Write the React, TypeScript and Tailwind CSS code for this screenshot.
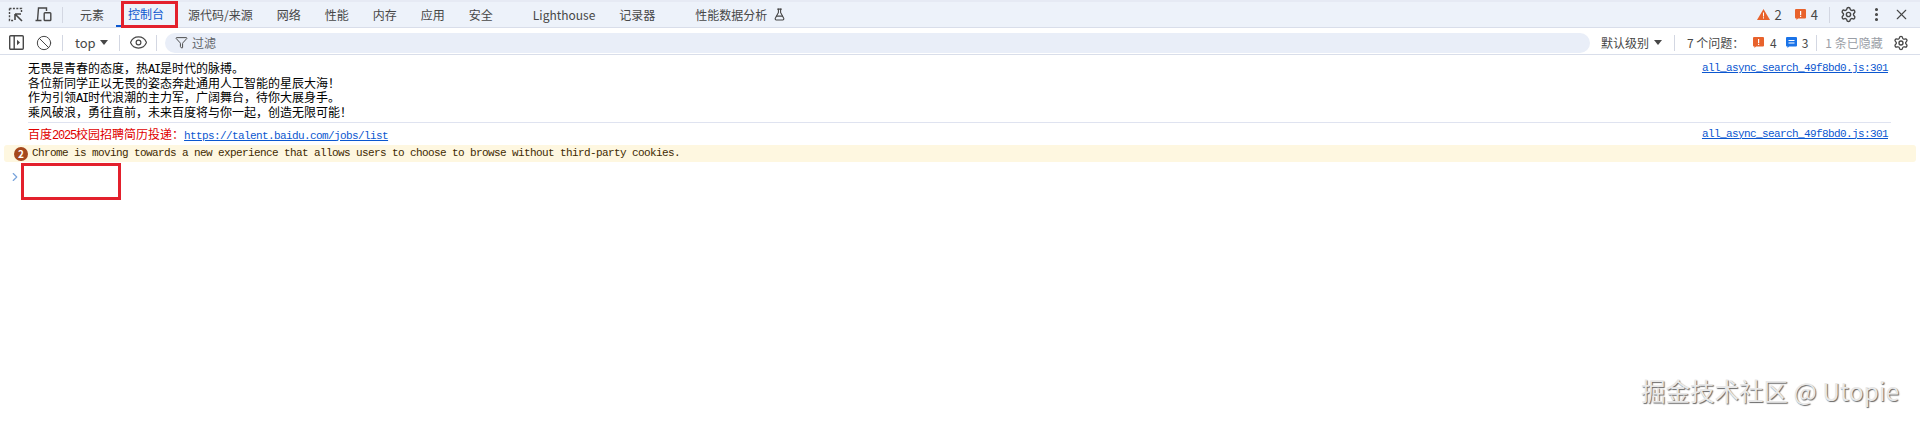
import React from 'react';
import { Settings, EllipsisVertical, X, Ban, Eye, Filter, ChevronRight, FlaskConical } from 'lucide-react';

const sans = { fontFamily: '"Noto Sans CJK SC", "Noto Sans", sans-serif' };
const mono = { fontFamily: '"Liberation Mono", monospace' };

const InspectIcon = () => (
  <svg width="16" height="16" viewBox="0 0 16 16" fill="none" stroke="#474747" strokeWidth="1.4">
    <path d="M1.5 1.5h12v4M1.5 1.500v12h4" strokeDasharray="2 1.4" />
    <path d="M7 7h6M7 7v6M7.5 7.5l6.5 6.5" strokeWidth="1.6" />
  </svg>
);

const DeviceIcon = () => (
  <svg width="17" height="15" viewBox="0 0 17 15" fill="none" stroke="#474747" strokeWidth="1.4">
    <path d="M0.5 13.5h6M2.5 13.5l1-12.5h8v3" />
    <rect x="9.2" y="5.7" width="6.6" height="7.8" rx="0.8" />
  </svg>
);

const DockIcon = () => (
  <svg width="15" height="15" viewBox="0 0 15 15" fill="none" stroke="#474747" strokeWidth="1.4">
    <rect x="0.7" y="0.7" width="13.6" height="13.6" rx="1" />
    <path d="M5.2 1v13" />
    <path d="M8 4.8l3 2.7-3 2.7z" fill="#474747" stroke="none" />
  </svg>
);

const Caret = () => <span className="block w-0 h-0 border-x-[4px] border-x-transparent border-t-[5px] border-t-[#474747]" />;
const Sep = ({ className = 'mx-[11px]' }: { className?: string }) => <span className={`block w-px h-4 bg-[#d3d7e2] ${className}`} />;

const WarnTriangle = () => (
  <svg width="13" height="11" viewBox="0 0 13 11"><path d="M6.5 0L13 11H0z" fill="#e8622c" /><path d="M6 3.5h1V7.5H6zM6 8.2h1v1.2H6z" fill="#fff" /></svg>
);
const OrangeBox = () => (
  <svg width="11" height="11" viewBox="0 0 11 11"><path d="M1 0h9a1 1 0 0 1 1 1v7.500a1 1 0 0 1-1 1H3L1.500 11V9.500H1a1 1 0 0 1-1-1V1a1 1 0 0 1 1-1z" fill="#e8622c" /><path d="M5 2h1.200v4H5zM5 6.800h1.200V8H5z" fill="#fff" /></svg>
);
const BlueBox = () => (
  <svg width="11" height="11" viewBox="0 0 11 11"><path d="M1 0h9a1 1 0 0 1 1 1v7.500a1 1 0 0 1-1 1H3L1.500 11V9.500H1a1 1 0 0 1-1-1V1a1 1 0 0 1 1-1z" fill="#1a73e8" /><path d="M2.500 3h6v1h-6zM2.500 5.500h6v1h-6z" fill="#fff" /></svg>
);

const Tab = ({ label, active, className = '' }: { label: string; active?: boolean; className?: string }) => (
  <div className={`h-full flex items-center px-3 ${active ? 'text-[#0b57d0] border-b-2 border-[#0b57d0]' : 'text-[#474747]'} ${className}`}>{label}</div>
);

// console text: 6px wide latin next to 12px wide han
const Latin = ({ children }: { children: React.ReactNode }) => <span className="text-[12px] tracking-[-1.2px] leading-none" style={mono}>{children}</span>;

const Line = ({ children }: { children: React.ReactNode }) => <div className="h-[14.5px]">{children}</div>;

const SourceLink = () => (
  <a className="block h-[15px] text-[11px] leading-[15px] tracking-[-0.6px] text-[#0b57d0] underline mr-[3px]" style={mono}>all_async_search_49f8bd0.js:301</a>
);

export default function App() {
  return (
    <div className="relative h-[421px] w-[1920px] overflow-hidden bg-white text-[12px]" style={sans}>
      <div className="flex items-center h-[28px] bg-[#edf2fa] border-t-2 border-t-[#e6eaf4] border-b border-b-[#d9deea]">
        <div className="flex items-center pl-[8px]">
          <InspectIcon />
          <span className="ml-[11px]"><DeviceIcon /></span>
          <Sep className="ml-[10px] mr-[5px]" />
        </div>
        <Tab label="元素" />
        <Tab label="控制台" active />
        <Tab label="源代码/来源" />
        <Tab label="网络" />
        <Tab label="性能" />
        <Tab label="内存" />
        <Tab label="应用" />
        <Tab label="安全" />
        <Tab label="Lighthouse" className="ml-[16px]" />
        <Tab label="记录器" />
        <Tab label="性能数据分析" className="ml-[16px] pr-[6px]" />
        <FlaskConical size={13} color="#474747" />
        <div className="ml-auto flex items-center text-[#474747] text-[13px]">
          <WarnTriangle />
          <span className="ml-[5px] mr-[13px]">2</span>
          <OrangeBox />
          <span className="ml-[5px]">4</span>
          <Sep className="ml-[11px] mr-[10px]" />
          <Settings size={17} strokeWidth={2} />
          <EllipsisVertical size={17} strokeWidth={2.4} className="ml-[11px]" />
          <X size={17} strokeWidth={1.6} className="ml-[8px] mr-[10px]" />
        </div>
      </div>
      <div className="flex items-center h-[27px] pt-[3px] border-b border-b-[#d9deea]">
        <div className="flex items-center pl-[9px]">
          <DockIcon />
          <Ban size={16} strokeWidth={1.5} color="#474747" className="ml-[12px]" />
          <Sep className="ml-[10px] mr-[12px]" />
        </div>
        <span className="text-[#474747] text-[13px] w-[25px]">top</span>
        <Caret />
        <Sep className="ml-[11px] mr-[9px]" />
        <Eye size={19} strokeWidth={1.5} color="#474747" />
        <Sep className="ml-[8px] mr-[8px]" />
        <div className="flex items-center h-5 w-[1425px] rounded-full bg-[#e9eef8] pl-[10px] text-[#5f6368]">
          <Filter size={13} strokeWidth={1.8} color="#474747" />
          <span className="ml-[4px]">过滤</span>
        </div>
        <span className="ml-[11px] text-[#474747]">默认级别</span>
        <span className="ml-[5px]"><Caret /></span>
        <Sep className="ml-[12px] mr-[12px]" />
        <span className="text-[#474747] w-[66px]">7 个问题：</span>
        <OrangeBox />
        <span className="ml-[6px] mr-[9px] text-[#474747]">4</span>
        <BlueBox />
        <span className="ml-[5px] mr-[8px] text-[#474747]">3</span>
        <Sep className="mr-[8px]" />
        <span className="text-[#9a9ea6]">1 条已隐藏</span>
        <Settings size={16} strokeWidth={2} color="#474747" className="ml-[10px]" />
      </div>
      <div className="pl-[28px] pr-[29px] text-black leading-[14.5px] pt-[6px]">
        <div className="flex justify-between h-[61px]">
          <div>
            <Line>无畏是青春的态度，热<Latin>AI</Latin>是时代的脉搏。</Line>
            <Line>各位新同学正以无畏的姿态奔赴通用人工智能的星辰大海！</Line>
            <Line>作为引领<Latin>AI</Latin>时代浪潮的主力军，广阔舞台，待你大展身手。</Line>
            <Line>乘风破浪，勇往直前，未来百度将与你一起，创造无限可能！</Line>
          </div>
          <SourceLink />
        </div>
        <div className="flex justify-between items-center border-t border-t-[#dfe3f0] h-[23px]">
          <div className="h-[15px]">
            <span className="text-[#e00000]">百度<Latin>2025</Latin>校园招聘简历投递：</span>
            <a className="text-[11px] tracking-[-0.6px] text-[#0b57d0] underline leading-none" style={mono}>https://talent.baidu.com/jobs/list</a>
          </div>
          <SourceLink />
        </div>
      </div>
      <div className="mx-[4px] flex items-center h-[17px] rounded-[3px] bg-[#fef7e0] pl-[10px]">
        <span className="flex items-center justify-center w-[14px] h-[14px] rounded-full bg-[#a5481c] text-white text-[10px] font-bold">2</span>
        <span className="ml-[4px] text-[11px] tracking-[-0.6px] text-[#3f2a00]" style={mono}>Chrome is moving towards a new experience that allows users to choose to browse without third-party cookies.</span>
      </div>
      <ChevronRight size={14} strokeWidth={2} color="#7aa5dc" className="ml-[8px] mt-[8px]" />
      <div className="absolute left-[121px] top-[1px] w-[57px] h-[27px] border-[3px] border-[#e3202c]" />
      <div className="absolute left-[21px] top-[163px] w-[100px] h-[37px] border-[3px] border-[#e3202c]" />
      <div className="absolute left-[1641px] top-[375px] text-[24.5px] leading-[32px] whitespace-nowrap text-[#e8e8e8] [text-shadow:1px_1px_1px_#666666]">掘金技术社区 @ Utopie</div>
    </div>
  );
}
